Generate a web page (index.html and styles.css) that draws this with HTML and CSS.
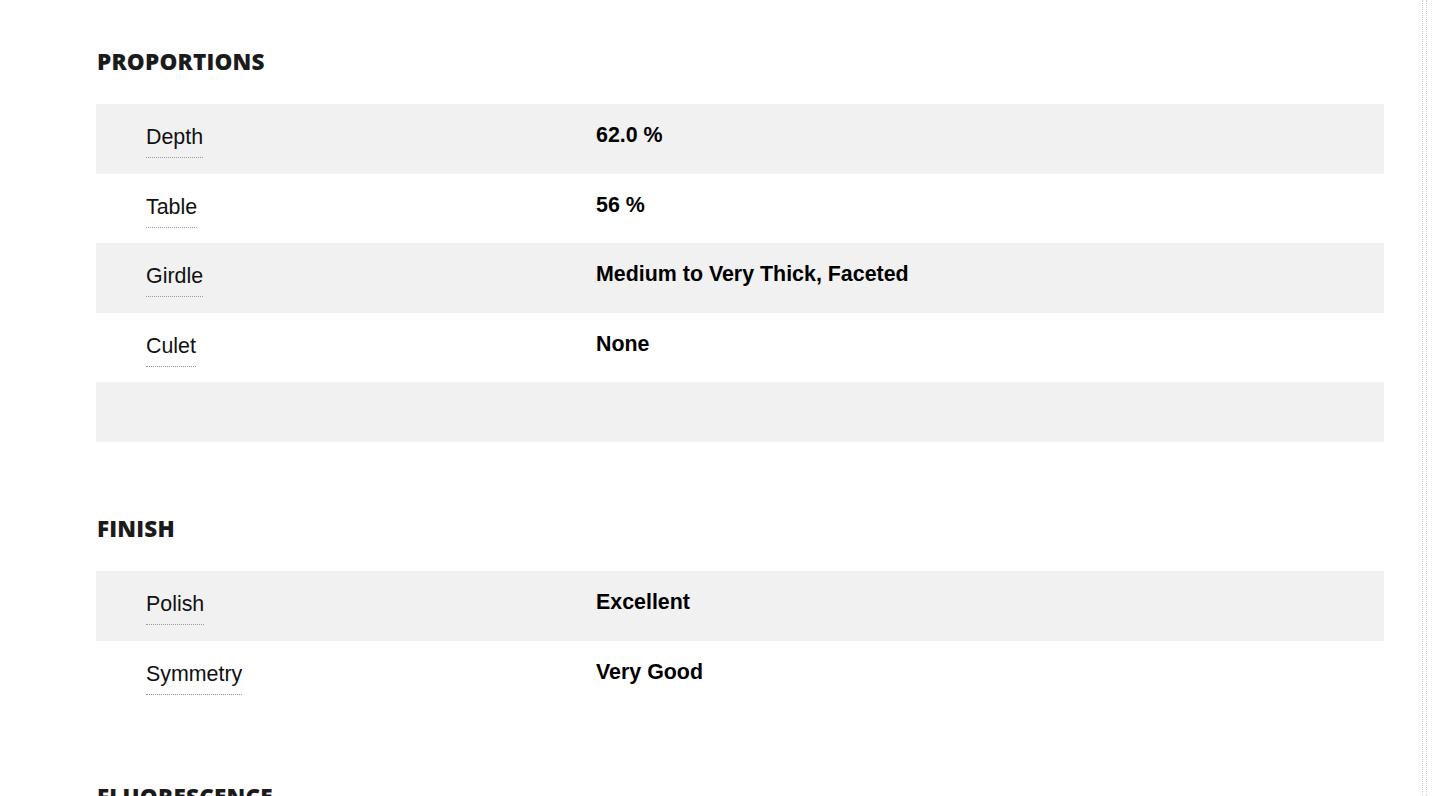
FILE: index.html
```html
<!DOCTYPE html>
<html>
<head>
<meta charset="utf-8">
<link rel="stylesheet" href="styles.css">
</head>
<body>
<div class="page">
  <main class="content">
    <section class="section">
      <h2 class="heading">PROPORTIONS</h2>
      <div class="table">
        <div class="row"><div class="label"><span class="term">Depth</span></div><div class="value">62.0 %</div></div>
        <div class="row"><div class="label"><span class="term">Table</span></div><div class="value">56 %</div></div>
        <div class="row"><div class="label"><span class="term">Girdle</span></div><div class="value">Medium to Very Thick, Faceted</div></div>
        <div class="row"><div class="label"><span class="term">Culet</span></div><div class="value">None</div></div>
        <div class="row row-empty"></div>
      </div>
    </section>
    <section class="section">
      <h2 class="heading">FINISH</h2>
      <div class="table">
        <div class="row"><div class="label"><span class="term">Polish</span></div><div class="value">Excellent</div></div>
        <div class="row"><div class="label"><span class="term">Symmetry</span></div><div class="value">Very Good</div></div>
      </div>
    </section>
    <section class="section">
      <h2 class="heading">FLUORESCENCE</h2>
    </section>
  </main>
  <div class="rail"></div>
</div>
</body>
</html>
```

FILE: styles.css
```css
html, body {
  margin: 0;
  padding: 0;
  background: #ffffff;
  overflow: hidden;
}
.page {
  display: flex;
  min-height: 100vh;
}
.content {
  width: 1288px;
  margin-left: 96px;
  margin-right: 38px;
  flex: none;
}
.rail {
  width: 3px;
  border-left: 1px dotted #cfcfcf;
  border-right: 1px dotted #cfcfcf;
  flex: none;
}
.section {
  margin-bottom: 71px;
}
.section:first-child {
  padding-top: 46px;
}
.heading {
  margin: 0 0 28px 1px;
  font-family: "Open Sans", "DejaVu Sans", sans-serif;
  font-weight: 800;
  font-size: 22.5px;
  line-height: 30px;
  color: #1b1b1b;
  letter-spacing: 0.2px;
  position: relative;
  top: 1px;
}
.table {
  display: flex;
  flex-direction: column;
}
.row {
  display: flex;
  height: 69.5px;
  font-family: "Liberation Sans", Arial, sans-serif;
  font-size: 21.4px;
  line-height: 24px;
  color: #111;
}
.row:nth-child(odd) {
  background: #f1f1f1;
}
.row-empty {
  height: 60px;
}
.label {
  width: 450px;
  padding-left: 50px;
  padding-top: 21px;
  flex: none;
}
.term {
  display: inline-block;
  padding-bottom: 8px;
  border-bottom: 1px dotted #9a9a9a;
}
.value {
  padding-top: 19px;
  font-weight: 700;
  color: #000;
}
```
